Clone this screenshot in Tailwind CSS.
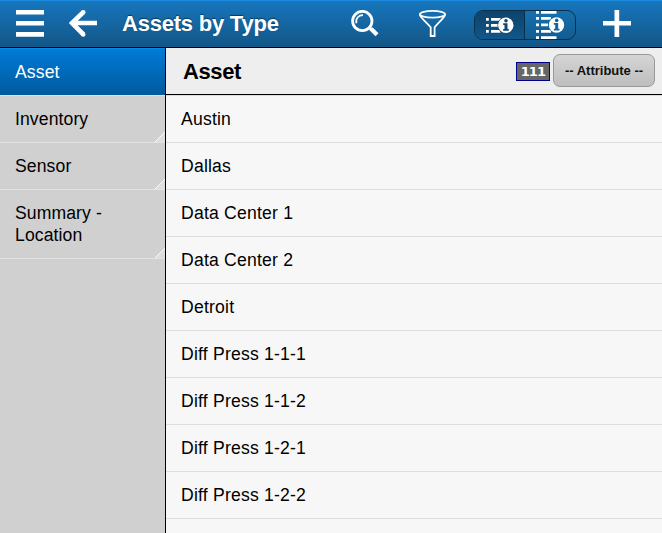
<!DOCTYPE html>
<html lang="en">
<head>
<meta charset="utf-8">
<title>Assets by Type</title>
<script src="https://cdn.jsdelivr.net/npm/@tailwindcss/browser@4"></script>
</head>
<body class="w-[662px] h-[533px] overflow-hidden flex flex-col bg-[#f7f7f7] text-black text-[17.6px] leading-[22px] tracking-[0.1px] font-['Liberation_Sans',Arial,sans-serif]">
<header class="h-12 shrink-0 flex items-start border-b border-black bg-linear-to-b from-[#1777be] to-[#125687] shadow-[inset_0_1px_0_#1a8ade] text-white">
  <svg class="ml-4 mt-[10px] shrink-0" width="28" height="28" viewBox="0 0 28 28" fill="#fff"><path d="M0 0h28v4.500H0zM0 11h28v4.500H0zM0 22h28v4.800H0z"/></svg>
  <svg class="ml-[25px] mt-[10px] shrink-0" width="28" height="27" viewBox="0 0 28 27"><path d="M28 13H4M14.500 2L3 13l11.500 11.500" fill="none" stroke="#fff" stroke-width="4.600"/><circle cx="14.300" cy="2.200" r="2.200" fill="#fff"/><circle cx="14.300" cy="24.500" r="2.200" fill="#fff"/></svg>
  <h1 class="ml-[25px] mt-[11px] w-[229px] shrink-0 font-bold text-[22px] leading-[26px] tracking-[-0.22px] whitespace-nowrap [text-shadow:0_-1px_1px_#0a3a60]">Assets by Type</h1>
  <svg class="mt-[10px] shrink-0" width="28" height="28" viewBox="0 0 28 28" fill="none" stroke="#fff"><circle cx="11.300" cy="11" r="9.700" stroke-width="2.800"/><path d="M5.500 13.200C4.200 8.300 8 5 12 5.200" stroke-width="1.700"/><path d="M18.300 17.500l2 2" stroke-width="3"/><path d="M20 18.800l6 6" stroke-width="4.200"/></svg>
  <svg class="ml-10 mt-[10px] shrink-0" width="28" height="28" viewBox="0 0 28 28" fill="none" stroke="#fff" stroke-width="1.800"><ellipse cx="13.500" cy="4.300" rx="12.600" ry="3.400"/><path d="M.9 4.500C1 7.500 6.500 11 11.700 17.300V26h3.900v-8.700C20.500 11 26 7.500 26.100 4.500"/></svg>
  <div class="ml-[27px] mt-[10px] w-[102px] h-[30px] shrink-0 flex rounded-[9px] border border-[#0a2f49] overflow-hidden bg-linear-to-b from-[#1770af] to-[#125c91]">
    <div class="w-[50px] shrink-0 border-r border-[#0a2f49] bg-linear-to-b from-[#0d436b] to-[#115788]">
      <svg width="49" height="28" viewBox="0 0 49 28" fill="#fff"><path d="M11 7h2.800v2.800H11zM16 7h9.500v2.800H16zM11 13h2.800v2.800H11zM16 13h7v2.800h-7zM11 19h2.800v2.800H11zM16 19h9.500v2.800H16z"/><circle cx="30.800" cy="14.300" r="8.300" fill="#104b77"/><circle cx="30.800" cy="14.300" r="7.700"/><path d="M28.200 12.300h4.300v5.700h1.300v1.700h-5.600V18h1.300v-4h-1.300z" fill="#11466e"/><circle cx="31" cy="9.700" r="1.800" fill="#11466e"/></svg>
    </div>
    <svg class="shrink-0" width="50" height="28" viewBox="0 0 50 28" fill="#fff"><path d="M11 0h3v2.800h-3zM16 0h15.500v2.800H16zM11 6h3v2.800h-3zM16 6h10v2.800H16zM11 12.500h3v2.800h-3zM16 12.500h7v2.800h-7zM11 19h3v2.800h-3zM16 19h10v2.800H16zM11 25.200h3V28h-3zM16 25.200h15.500V28H16z"/><circle cx="31.500" cy="14" r="8.300" fill="#14649d"/><circle cx="31.500" cy="14" r="7.700"/><path d="M28.900 12h4.300v5.700h1.300v1.700h-5.600v-1.700h1.300v-4h-1.300z" fill="#14649d"/><circle cx="31.700" cy="9.400" r="1.800" fill="#14649d"/></svg>
  </div>
  <svg class="ml-[27px] mt-[10px] shrink-0" width="28" height="27" viewBox="0 0 28 27" fill="#fff"><path d="M11.500 0h4.700v27h-4.700zM0 11h28v4.500H0z"/></svg>
</header>
<main class="flex flex-1 min-h-0">
  <nav class="w-[166px] shrink-0 border-r border-black bg-[#d0d0d0]">
    <div class="h-[47px] pl-[15px] pt-[13px] text-white bg-linear-to-b from-[#007cd8] to-[#005a9d] shadow-[inset_0_1px_0_#0e88e0]">Asset</div>
    <div class="h-12 pl-[15px] pt-[12px] border-y border-[#e2e2e2] relative">Inventory<svg class="absolute right-0 bottom-0" width="10" height="10" viewBox="0 0 10 10"><path d="M10 0v10H0z" fill="#dedede"/><path d="M0 10L10 0" stroke="#f8f8f8"/></svg></div>
    <div class="h-[47px] pl-[15px] pt-[12px] border-b border-[#e2e2e2] relative">Sensor<svg class="absolute right-0 bottom-0" width="10" height="10" viewBox="0 0 10 10"><path d="M10 0v10H0z" fill="#dedede"/><path d="M0 10L10 0" stroke="#f8f8f8"/></svg></div>
    <div class="h-[69px] pl-[15px] pt-[12px] border-b border-[#e2e2e2] relative">Summary -<br>Location<svg class="absolute right-0 bottom-0" width="10" height="10" viewBox="0 0 10 10"><path d="M10 0v10H0z" fill="#dedede"/><path d="M0 10L10 0" stroke="#f8f8f8"/></svg></div>
  </nav>
  <section class="flex-1">
    <div class="h-[47px] flex items-start border-b border-black bg-[#eee] pl-[17px] pr-[7px]">
      <h2 class="mt-[11px] flex-1 font-bold text-[22px] leading-[26px] tracking-[-0.4px]">Asset</h2>
      <span class="mt-[14px] w-[34px] h-[19px] border border-[#00008b] bg-[#666] text-white text-center font-bold font-['DejaVu_Sans',sans-serif] text-[13px] leading-[18px] tracking-[-0.8px]">111</span>
      <button class="ml-[3px] mt-[6px] w-[102px] h-[33px] rounded-[7px] border border-[#999] bg-linear-to-b from-[#d5d5d5] to-[#bebebe] font-bold text-[13px] leading-[31px] tracking-normal text-[#111] whitespace-nowrap">-- Attribute --</button>
    </div>
    <ul class="border-t border-[#ddd] tracking-[0.2px] *:h-[47px] *:pl-[15px] *:pt-[12px] *:border-b *:border-[#ddd]">
      <li>Austin</li><li>Dallas</li><li>Data Center 1</li><li>Data Center 2</li><li>Detroit</li><li>Diff Press 1-1-1</li><li>Diff Press 1-1-2</li><li>Diff Press 1-2-1</li><li>Diff Press 1-2-2</li>
    </ul>
  </section>
</main>
</body>
</html>
